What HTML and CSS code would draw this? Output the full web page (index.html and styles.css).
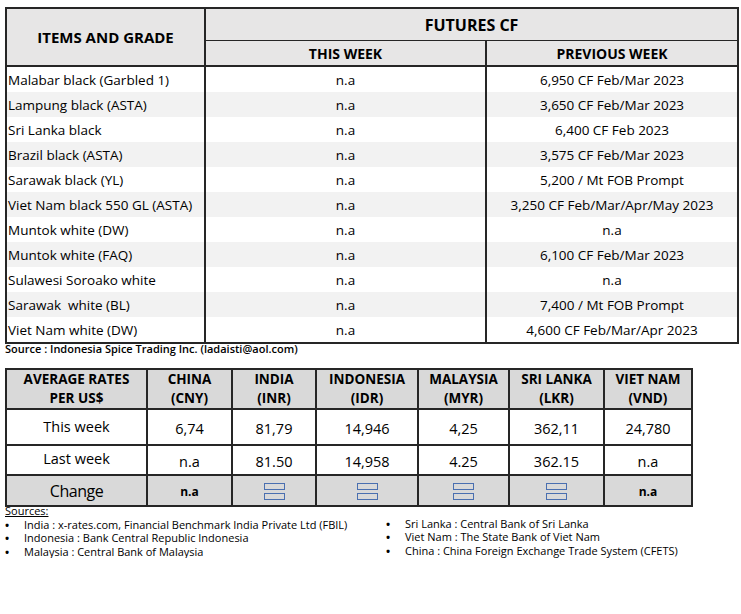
FILE: index.html
```html
<!DOCTYPE html>
<html>
<head>
<meta charset="utf-8">
<link rel="stylesheet" href="styles.css">
</head>
<body>
<div class="page">
  <table class="futures">
    <colgroup><col class="c1"><col class="c2"><col class="c3"></colgroup>
    <thead>
      <tr class="h1">
        <th rowspan="2" class="items">ITEMS AND GRADE</th>
        <th colspan="2" class="fut">FUTURES CF</th>
      </tr>
      <tr class="h2">
        <th>THIS WEEK</th>
        <th>PREVIOUS WEEK</th>
      </tr>
    </thead>
    <tbody>
      <tr><td>Malabar black (Garbled 1)</td><td>n.a</td><td>6,950 CF Feb/Mar 2023</td></tr>
      <tr class="alt"><td>Lampung black (ASTA)</td><td>n.a</td><td>3,650 CF Feb/Mar 2023</td></tr>
      <tr><td>Sri Lanka black</td><td>n.a</td><td>6,400 CF Feb 2023</td></tr>
      <tr class="alt"><td>Brazil black (ASTA)</td><td>n.a</td><td>3,575 CF Feb/Mar 2023</td></tr>
      <tr><td>Sarawak black (YL)</td><td>n.a</td><td>5,200 / Mt FOB Prompt</td></tr>
      <tr class="alt"><td>Viet Nam black 550 GL (ASTA)</td><td>n.a</td><td>3,250 CF Feb/Mar/Apr/May 2023</td></tr>
      <tr><td>Muntok white (DW)</td><td>n.a</td><td>n.a</td></tr>
      <tr class="alt"><td>Muntok white (FAQ)</td><td>n.a</td><td>6,100 CF Feb/Mar 2023</td></tr>
      <tr><td>Sulawesi Soroako white</td><td>n.a</td><td>n.a</td></tr>
      <tr class="alt"><td>Sarawak&nbsp; white (BL)</td><td>n.a</td><td>7,400 / Mt FOB Prompt</td></tr>
      <tr><td>Viet Nam white (DW)</td><td>n.a</td><td>4,600 CF Feb/Mar/Apr 2023</td></tr>
    </tbody>
  </table>
  <p class="source">Source : Indonesia Spice Trading Inc. (ladaisti@aol.com)</p>

  <table class="rates">
    <colgroup>
      <col class="r1"><col class="r2"><col class="r3"><col class="r4"><col class="r5"><col class="r6"><col class="r7">
    </colgroup>
    <thead>
      <tr>
        <th>AVERAGE RATES<br>PER US$</th>
        <th>CHINA<br>(CNY)</th>
        <th>INDIA<br>(INR)</th>
        <th>INDONESIA<br>(IDR)</th>
        <th>MALAYSIA<br>(MYR)</th>
        <th>SRI LANKA<br>(LKR)</th>
        <th>VIET NAM<br>(VND)</th>
      </tr>
    </thead>
    <tbody>
      <tr class="this">
        <td class="lbl">This week</td><td>6,74</td><td>81,79</td><td>14,946</td><td>4,25</td><td>362,11</td><td>24,780</td>
      </tr>
      <tr class="last">
        <td class="lbl">Last week</td><td>n.a</td><td>81.50</td><td>14,958</td><td>4.25</td><td>362.15</td><td>n.a</td>
      </tr>
      <tr class="change">
        <td class="lbl">Change</td>
        <td class="na">n.a</td>
        <td><span class="boxes"><span class="box"></span><span class="box"></span></span></td>
        <td><span class="boxes"><span class="box"></span><span class="box"></span></span></td>
        <td><span class="boxes"><span class="box"></span><span class="box"></span></span></td>
        <td><span class="boxes"><span class="box"></span><span class="box"></span></span></td>
        <td class="na">n.a</td>
      </tr>
    </tbody>
  </table>

  <div class="sources">
    <div class="src-title">Sources:</div>
    <div class="src-cols">
      <ul class="src-list left">
        <li>India : x-rates.com, Financial Benchmark India Private Ltd (FBIL)</li>
        <li>Indonesia : Bank Central Republic Indonesia</li>
        <li>Malaysia : Central Bank of Malaysia</li>
      </ul>
      <ul class="src-list right">
        <li>Sri Lanka : Central Bank of Sri Lanka</li>
        <li>Viet Nam : The State Bank of Viet Nam</li>
        <li>China : China Foreign Exchange Trade System (CFETS)</li>
      </ul>
    </div>
  </div>
</div>
</body>
</html>
```
FILE: styles.css
```css
html, body {
  margin: 0;
  padding: 0;
  background: #ffffff;
}
body {
  font-family: "Open Sans", "Noto Sans", "Liberation Sans", sans-serif;
  color: #000;
}
.page {
  padding: 7px 4px 0 5px;
}
table {
  border-collapse: collapse;
  table-layout: fixed;
}

/* Futures table */
.futures {
  width: 732px;
  border: 2px solid #262626;
}
.futures .c1 { width: 199px; }
.futures .c2 { width: 281px; }
.futures .c3 { width: 252px; }
.futures th {
  background: #e7e6e6;
  font-weight: 700;
  font-size: 14px;
  padding: 0;
  text-align: center;
  border-left: 2px solid #262626;
  border-right: 2px solid #262626;
}
.futures th.items { font-size: 15px; }
.futures th.fut { font-size: 16px; }
.futures .h1 th { height: 31px; border-bottom: 1px solid #262626; }
.futures .h1 th.items { border-bottom: 2px solid #262626; }
.futures .h2 th { height: 24px; border-bottom: 2px solid #262626; }
.futures td {
  height: 25px;
  padding: 0;
  font-size: 13.5px;
  text-align: center;
  border-left: 2px solid #262626;
  border-right: 2px solid #262626;
  white-space: nowrap;
}
.futures td:first-child {
  text-align: left;
  padding-left: 1px;
}
.futures tr.alt td { background: #f2f2f2; }

.source {
  margin: -2px 0 0 0;
  font-size: 11px;
  font-weight: 600;
  line-height: 14px;
}

/* Rates table */
.rates {
  margin-top: 12px;
  width: 686px;
  border: 2px solid #262626;
}
.rates .r1 { width: 141px; }
.rates .r2 { width: 85px; }
.rates .r3 { width: 84px; }
.rates .r4 { width: 102px; }
.rates .r5 { width: 91px; }
.rates .r6 { width: 95px; }
.rates .r7 { width: 88px; }
.rates th, .rates td {
  border: 2px solid #262626;
  padding: 0;
  text-align: center;
}
.rates th {
  background: #d9d9d9;
  font-weight: 700;
  font-size: 13.5px;
  line-height: 19px;
  height: 37px;
}
.rates td {
  font-size: 14.5px;
}
.rates tr.this td { height: 32px; padding-top: 2px; }
.rates tr.last td { height: 25px; padding-top: 3px; }
.rates tr.this td.lbl { padding-top: 0; padding-bottom: 2px; }
.rates tr.last td.lbl { padding-top: 0; padding-bottom: 3px; }
.rates tr.change td {
  background: #d9d9d9;
  height: 28px;
}
.rates tr.change td.lbl {
  font-size: 16px;
  letter-spacing: -0.5px;
}
.rates tr.change td.na {
  font-size: 12px;
  font-weight: 700;
  padding-top: 1px;
}
.boxes {
  display: inline-flex;
  flex-direction: column;
  gap: 3px;
  vertical-align: middle;
}
.box {
  display: block;
  width: 19px;
  height: 5px;
  border: 1.5px solid #4a6fb0;
}

/* Sources */
.sources {
  font-size: 11px;
  line-height: 13.5px;
  margin-top: -3px;
}
.src-title {
  text-decoration: underline;
}
.src-cols {
  display: flex;
}
.src-list {
  list-style: none;
  margin: 0;
  padding: 0;
}
.src-list li {
  position: relative;
  padding-left: 19px;
}
.src-list li::before {
  content: "\2022";
  position: absolute;
  left: 0;
  top: 0;
  font-size: 11px;
  font-weight: 700;
}
.src-list.left {
  width: 363px;
  margin-top: 0;
}
.src-list.right {
  margin-left: 18px;
  margin-top: -1px;
}
```
